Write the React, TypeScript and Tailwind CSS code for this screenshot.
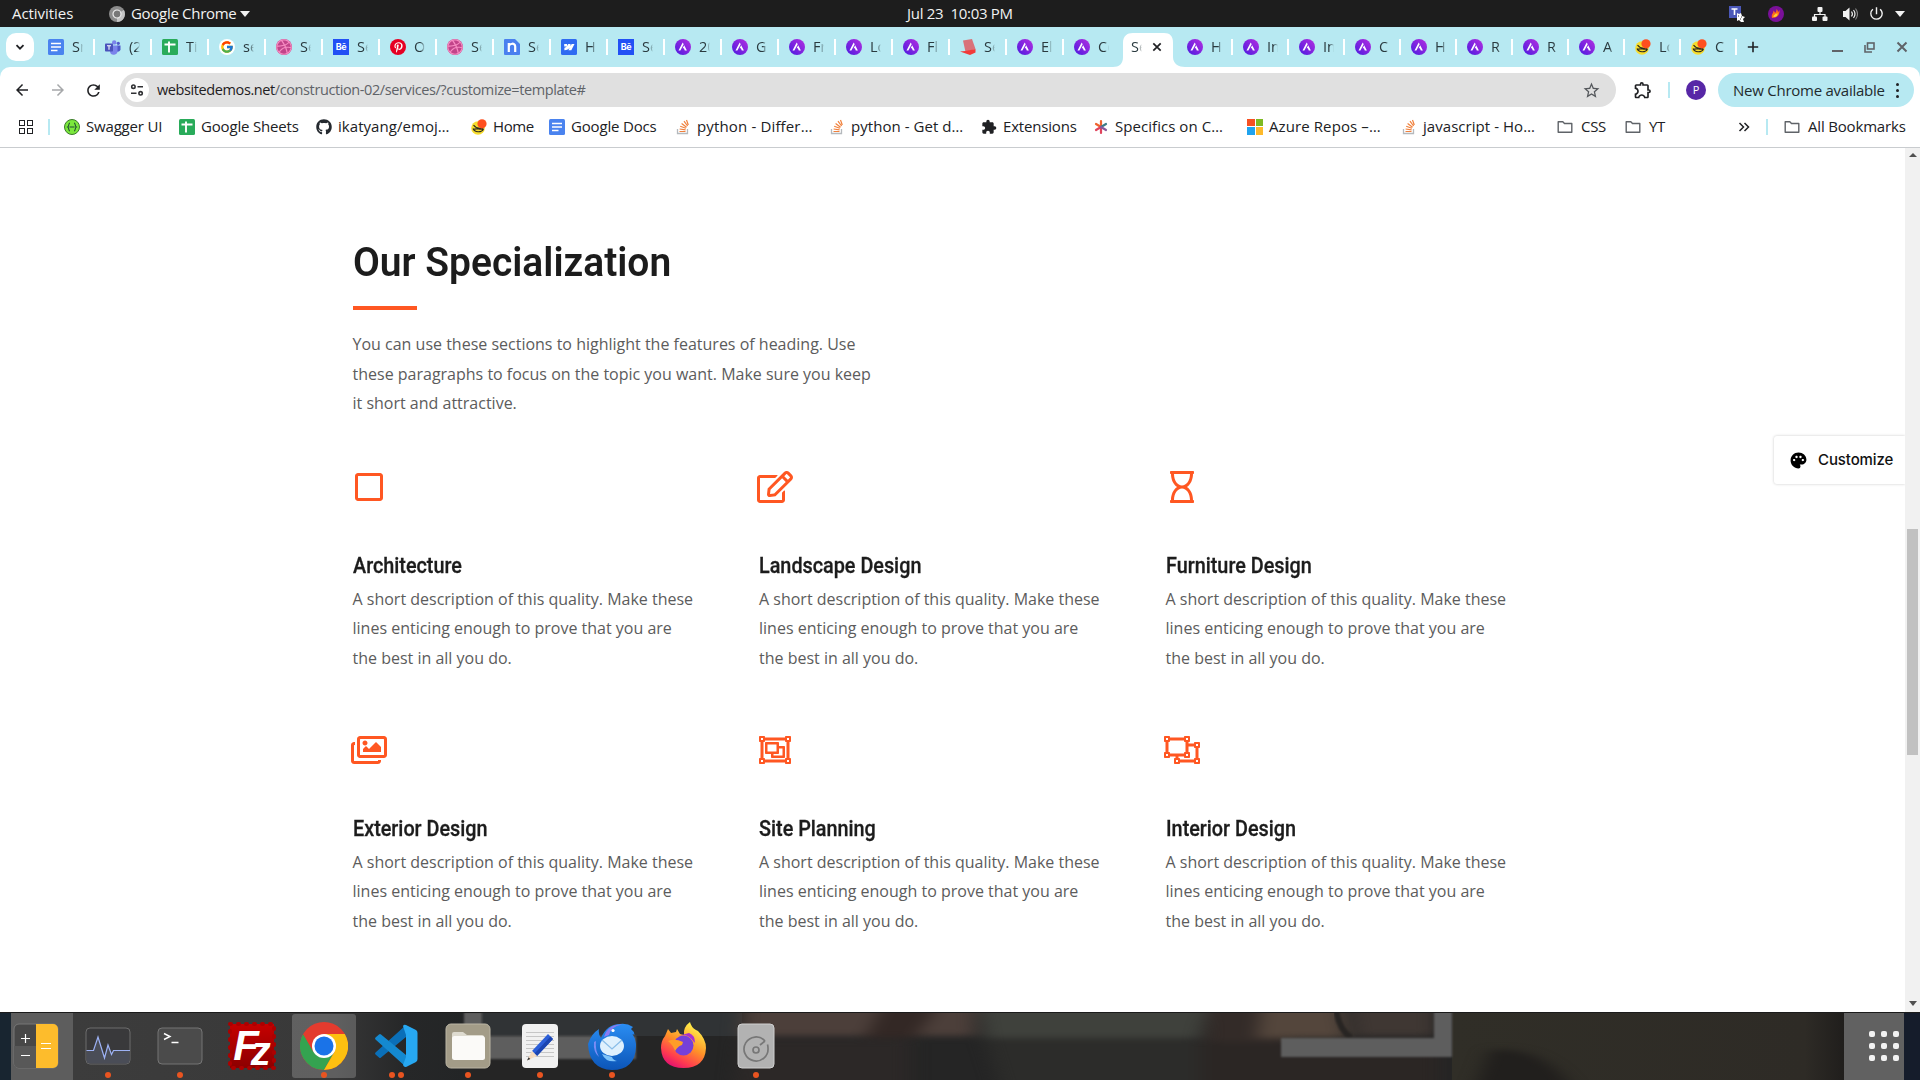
import type { ReactNode } from "react";
import { FaRegSquare, FaRegEdit, FaRegHourglass, FaRegImages, FaRegObjectGroup, FaRegObjectUngroup, FaGithub, FaPinterestP, FaDribbble } from "react-icons/fa";
import { MdPalette, MdExtension, MdOutlineExtension, MdArrowBack, MdArrowForward, MdRefresh, MdStarBorder, MdPowerSettingsNew } from "react-icons/md";
import { FcGoogle } from "react-icons/fc";

type Kind =
  | "docs" | "teams" | "sheets" | "google" | "dribbble" | "behance" | "pinterest" | "n" | "webflow"
  | "astra" | "red" | "chef" | "swagger" | "github" | "stack" | "puzzle" | "star" | "ms" | "folder";

function Fav({ kind }: { kind: Kind }): ReactNode {
  switch (kind) {
    case "docs":
      return (
        <svg className="size-4 shrink-0" viewBox="0 0 16 16">
          <rect width="16" height="16" rx="1.5" fill="#4a83ef" />
          <path d="M3 4.5h10M3 8h10M3 11.5h6.5" stroke="#fff" strokeWidth="1.6" />
        </svg>
      );
    case "sheets":
      return (
        <svg className="size-4 shrink-0" viewBox="0 0 16 16">
          <rect width="16" height="16" rx="1.5" fill="#29ab5a" />
          <path d="M2.5 5.5h11M7 2.5v11" stroke="#fff" strokeWidth="1.9" />
        </svg>
      );
    case "teams":
      return (
        <svg className="size-4 shrink-0" viewBox="0 0 16 16">
          <circle cx="13.3" cy="4.3" r="1.6" fill="#5059c9" />
          <circle cx="9.2" cy="3.4" r="2.2" fill="#7b83eb" />
          <path d="M12 6.5h3.5v4a2.6 2.6 0 0 1-3.5 2z" fill="#5059c9" />
          <path d="M5 6.5h7.5v5a3.7 3.7 0 0 1-7.5 1z" fill="#7b83eb" />
          <rect y="4.5" width="8" height="8" rx=".8" fill="#4b53bc" />
          <path d="M2 6.7h4M4 6.7v4" stroke="#fff" strokeWidth="1.1" />
        </svg>
      );
    case "google":
      return <span className="flex size-4 shrink-0 items-center justify-center rounded-full bg-white"><FcGoogle size={14} /></span>;
    case "dribbble":
      return (
        <span className="flex size-4 shrink-0 items-center justify-center rounded-full bg-[#c2448a]">
          <FaDribbble size={16} color="#f78cc2" />
        </span>
      );
    case "behance":
      return <span className="flex size-4 shrink-0 items-center justify-center bg-[#2250f5] font-['Inter'] text-[9px] font-bold tracking-[-0.4px] text-white">Bē</span>;
    case "pinterest":
      return <span className="flex size-4 shrink-0 items-center justify-center rounded-full bg-[#e60023]"><FaPinterestP size={11} color="#fff" /></span>;
    case "n":
      return (
        <svg className="size-4 shrink-0" viewBox="0 0 16 16">
          <path d="M1 0h10l5 5v10a1 1 0 0 1-1 1H1a1 1 0 0 1-1-1V1a1 1 0 0 1 1-1z" fill="#4a80ef" />
          <path d="M4.8 13V4M4.8 7.4C5.2 4 11.2 3.600 11.200 7.600V13" stroke="#fff" strokeWidth="2.2" fill="none" />
        </svg>
      );
    case "webflow":
      return (
        <svg className="size-4 shrink-0" viewBox="0 0 16 16">
          <rect width="16" height="16" rx="1.5" fill="#2f6bf2" />
          <path d="M13.500 5l-3.200 6.300H7.400l1.300-2.500C7.600 10.200 6 11.100 3.400 11.300V8.800c1-.1 1.900-.5 2.500-1.200H3.200V5h2.900v2l1.200-2h2.200v2l1.200-2z" fill="#fff" />
        </svg>
      );
    case "astra":
      return (
        <svg className="size-4 shrink-0" viewBox="0 0 16 16">
          <defs>
            <linearGradient id="astra" x1="0" y1="1" x2="1" y2="0">
              <stop offset="0" stopColor="#4a1be0" />
              <stop offset="1" stopColor="#b52ee0" />
            </linearGradient>
          </defs>
          <circle cx="8" cy="8" r="8" fill="url(#astra)" />
          <path d="M7.700 3.400 3.500 11.600h1.900l3.300-6.400z" fill="#fff" />
          <path d="M9.200 6.200 7.600 9.300h1.300l.9 2.300h2.100z" fill="#fff" />
        </svg>
      );
    case "red":
      return (
        <svg className="size-4 shrink-0" viewBox="0 0 16 16">
          <path d="M3 1.500 12 0l3.500 10-10 3z" fill="#d9727a" />
          <path d="M0 12.500 5.500 12l10-2v3.500L10 16z" fill="#f23a3a" />
        </svg>
      );
    case "chef":
      return (
        <svg className="size-4 shrink-0" viewBox="0 0 16 16">
          <circle cx="7" cy="9" r="6.800" fill="#f6dc2e" />
          <path d="M2.500 6.200c2.200 3 6.500 3.500 9.500 2.600M2 9.500c1.500 4 8.500 4.500 10.500.4M2.500 10.500c3-2 7 1 10-.8" stroke="#2b2a20" strokeWidth="1.100" fill="none" />
          <circle cx="11" cy="4.800" r="4.600" fill="#ff4f1f" />
        </svg>
      );
    case "swagger":
      return (
        <svg className="size-4 shrink-0" viewBox="0 0 16 16">
          <circle cx="8" cy="8" r="7.500" fill="#7be83c" stroke="#3a7a2a" strokeWidth="1" />
          <path d="M6 4c-1.800 0-.6 3.200-2.300 4C5.400 8.800 4.200 12 6 12M10 4c1.800 0 .6 3.200 2.300 4-1.700.8-.5 4-2.300 4M5.500 8h5" stroke="#1f4a34" strokeWidth="1.100" fill="none" />
        </svg>
      );
    case "github":
      return <FaGithub className="size-4 shrink-0" color="#24292f" />;
    case "stack":
      return (
        <svg className="size-4 shrink-0" viewBox="0 0 16 16" fill="none">
          <path d="M2.500 10v4.500h10V10" stroke="#b5b9bd" strokeWidth="1.300" />
          <path d="M4.500 12.500h6M4.600 10l6 .8M5.200 7.300l5.700 2M6.600 4.600l5 3.600M9 2.200l3.600 4.800M11.500 1l1.800 5" stroke="#f0803c" strokeWidth="1.200" />
        </svg>
      );
    case "puzzle":
      return <MdExtension className="size-4 shrink-0" color="#202124" />;
    case "star":
      return (
        <svg className="size-4 shrink-0" viewBox="0 0 16 16" strokeWidth="2.200" strokeLinecap="round">
          <path d="M8 8V2M8 8 3 5" stroke="#f0622d" />
          <path d="M8 8 3 11M8 8v6" stroke="#e0435c" />
          <path d="M8 8l5-3" stroke="#3b7c86" />
          <path d="M8 8l5 3" stroke="#8a5a9a" />
        </svg>
      );
    case "ms":
      return (
        <span className="grid size-4 shrink-0 grid-cols-2 gap-px">
          <i className="bg-[#f65022]" /><i className="bg-[#7eba22]" /><i className="bg-[#1fa3ee]" /><i className="bg-[#fdb92a]" />
        </span>
      );
    case "folder":
      return (
        <svg className="size-4 shrink-0" viewBox="0 0 16 16">
          <path d="M1.200 2.700h4.600l1.700 1.800h7.300v8.800H1.200z" fill="none" stroke="#5f6368" strokeWidth="1.400" strokeLinejoin="round" />
        </svg>
      );
  }
}

type TabData = [Kind, string];
const LEFT_TABS: TabData[] = [
  ["docs", "Sn"], ["teams", "(2"], ["sheets", "Ti"], ["google", "se"], ["dribbble", "Se"], ["behance", "Se"], ["pinterest", "O"],
  ["dribbble", "Se"], ["n", "Se"], ["webflow", "H"], ["behance", "Se"], ["astra", "20"], ["astra", "G"], ["astra", "Fr"], ["astra", "Lo"],
  ["astra", "Fl"], ["red", "Se"], ["astra", "El"], ["astra", "Co"],
];
const RIGHT_TABS: TabData[] = [
  ["astra", "H"], ["astra", "In"], ["astra", "In"], ["astra", "C"], ["astra", "H"], ["astra", "R"], ["astra", "R"], ["astra", "A"], ["chef", "Lo"], ["chef", "C"],
];

function TabLabel({ children }: { children: string }) {
  return (
    <span className="w-[11px] overflow-hidden text-[14.5px] leading-5 whitespace-nowrap text-[#2a3a3f] [mask-image:linear-gradient(to_right,black_60%,transparent)]">
      {children}
    </span>
  );
}

function Tab({ tab, wide, last }: { tab: TabData; wide?: boolean; last?: boolean }) {
  return (
    <div className={`flex h-5 shrink-0 items-center ${wide ? "w-[57px]" : "w-14"}`}>
      <div className="flex flex-1 items-center gap-2 pl-[10px]">
        <Fav kind={tab[0]} />
        <TabLabel>{tab[1]}</TabLabel>
      </div>
      {!last && <div className="h-4 w-0.5 shrink-0 bg-white" />}
    </div>
  );
}

const BOOKMARKS: { kind: Kind; label: string; box: string; text?: string }[] = [
  { kind: "swagger", label: "Swagger UI", box: "w-[115px]" },
  { kind: "sheets", label: "Google Sheets", box: "w-[137px]" },
  { kind: "github", label: "ikatyang/emoj…", box: "w-[155px]", text: "tracking-[0.05px]" },
  { kind: "chef", label: "Home", box: "w-[78px]", text: "tracking-[-0.4px]" },
  { kind: "docs", label: "Google Docs", box: "w-[126px]" },
  { kind: "stack", label: "python - Differ…", box: "w-[154px]", text: "tracking-[0.15px]" },
  { kind: "stack", label: "python - Get d…", box: "w-[152px]", text: "tracking-[0.05px]" },
  { kind: "puzzle", label: "Extensions", box: "w-[112px]" },
  { kind: "star", label: "Specifics on C…", box: "w-[154px]", text: "tracking-[0.05px]" },
  { kind: "ms", label: "Azure Repos –…", box: "w-[154px]", text: "tracking-[0.1px]" },
  { kind: "stack", label: "javascript - Ho…", box: "w-[156px]", text: "tracking-[0.05px]" },
  { kind: "folder", label: "CSS", box: "w-[68px]" },
  { kind: "folder", label: "YT", box: "w-[60px]" },
];

function SystemBar() {
  return (
    <div className="flex h-[27px] items-center bg-[#1d1d1d] text-[15px] tracking-[-0.3px] text-[#f2f2f2]">
      <div className="w-[109px] pl-3 tracking-[-0.05px]">Activities</div>
      <svg className="size-4" viewBox="0 0 16 16">
        <circle cx="8" cy="8" r="8" fill="#8c8c8c" />
        <path d="M8 8 14.900 4A8 8 0 0 1 8 16z" fill="#c4c4c4" />
        <circle cx="8" cy="8" r="4" fill="#777" stroke="#eee" strokeWidth="1.200" />
      </svg>
      <div className="w-[110px] pl-[6px] whitespace-nowrap">Google Chrome</div>
      <div className="ml-[5px] border-x-[5px] border-t-[6px] border-x-transparent border-t-[#f2f2f2]" />
      <div className="ml-[657px] w-[120px] whitespace-pre">Jul 23  10:03 PM</div>
      <div className="flex flex-1 items-center justify-end pr-[15px]">
        <svg className="mr-[23px] h-4 w-4" viewBox="0 0 16 16">
          <rect width="12" height="12" fill="#4b58b8" />
          <path d="M2.500 3h6M5.500 3v6" stroke="#fff" strokeWidth="1.600" />
          <path d="M8 7l2 1 2-1 1 3 3 1-2 2 1 3h-3l-2-2-2 1z" fill="#fff" />
          <path d="M9 10h1M12 11h1M11 13h1" stroke="#333" />
        </svg>
        <svg className="mr-[28px] size-4" viewBox="0 0 16 16">
          <circle cx="8" cy="8" r="8" fill="#7a1099" />
          <path d="M4 12C3 8 5.500 7.500 5.500 4.500 7 6 7 7 7 7c1.500-1 1.500-3 1.500-4 1.500 1 1.500 3 1.500 3 1-.5 1.500-2 1.500-2 .5 5-2.500 8-7.500 8z" fill="#ff6a1a" />
          <path d="M5.500 11C5 9 7 9 7.500 7.500 8.500 8 9 7.500 9.500 7c.5 3-1.500 4.500-4 4z" fill="#ffd02e" />
        </svg>
        <svg className="mr-[14px] size-4" viewBox="0 0 16 16" fill="#f2f2f2">
          <rect x="5.500" y="1" width="5" height="5" rx="1" />
          <rect x="0" y="10.500" width="5" height="4.500" rx="1" />
          <rect x="10.500" y="10.500" width="5" height="4.500" rx="1" />
          <path d="M8 6v2.500M2.500 11V8.500h10.500V11" fill="none" stroke="#f2f2f2" strokeWidth="1.200" />
        </svg>
        <svg className="mr-[10px] size-4" viewBox="0 0 16 16">
          <path d="M1 5h2.500L7.500 1.500v13L3.500 11H1z" fill="#f2f2f2" />
          <path d="M9.500 5.500q1.800 2.500 0 5M11.500 4q3 4 0 8" stroke="#f2f2f2" strokeWidth="1.200" fill="none" />
          <path d="M13.500 2.500q4 5.500 0 11" stroke="#888" strokeWidth="1.100" fill="none" />
        </svg>
        <MdPowerSettingsNew size={17} className="mr-[10px]" />
        <div className="border-x-[5px] border-t-[6px] border-x-transparent border-t-[#f2f2f2]" />
      </div>
    </div>
  );
}

function TabStrip() {
  return (
    <div className="flex h-10 items-center bg-[#b7e9f2]">
      <div className="ml-[6px] flex h-7 w-7 shrink-0 items-center justify-center rounded-[10px] bg-white">
        <svg className="size-3" viewBox="0 0 12 12"><path d="M2.500 4.200 6 7.700l3.500-3.500" stroke="#202124" strokeWidth="1.800" fill="none" /></svg>
      </div>
      <div className="ml-1 flex">
        {LEFT_TABS.map((t, i) => <Tab key={i} tab={t} wide last={i === LEFT_TABS.length - 1} />)}
      </div>
      <div className="flex h-10 w-[56px] items-end">
        <svg className="-ml-2 h-[34px] w-[72px] shrink-0" viewBox="0 0 72 34">
          <path d="M0 34C6 34 10 31 10 24V10C10 3 14 0 20 0H51C57 0 60 3 60 10V24C60 31 66 34 72 34z" fill="#fff" />
        </svg>
        <div className="relative -ml-[54px] flex h-[34px] w-[44px] items-center pb-[6px]">
          <TabLabel>Se</TabLabel>
          <svg className="ml-[9px] size-3 shrink-0" viewBox="0 0 12 12"><path d="M2.300 2.300l7.400 7.400M9.700 2.300 2.300 9.700" stroke="#202124" strokeWidth="1.700" /></svg>
        </div>
      </div>
      <div className="flex">
        {RIGHT_TABS.map((t, i) => <Tab key={i} tab={t} />)}
      </div>
      <svg className="ml-[10px] size-3" viewBox="0 0 12 12"><path d="M6 .8v10.400M.8 6h10.400" stroke="#202124" strokeWidth="1.600" /></svg>
      <div className="flex flex-1 items-center justify-end pr-3">
        <div className="mt-2 mr-[21px] h-0.5 w-[11px] bg-[#5f6368]" />
        <svg className="mr-[21px] size-[11px]" viewBox="0 0 11 11" fill="none" stroke="#5f6368" strokeWidth="1.600">
          <rect x="3.500" y="1" width="6.500" height="6" /><path d="M1 3v7h7" />
        </svg>
        <svg className="size-3" viewBox="0 0 12 12"><path d="M1.500 1.500l9 9M10.500 1.500l-9 9" stroke="#5f6368" strokeWidth="2" /></svg>
      </div>
    </div>
  );
}

function Toolbar() {
  return (
    <div className="bg-[#b7e9f2]">
      <div className="flex h-[46px] items-center rounded-t-[10px] bg-white">
        <MdArrowBack size={18} className="ml-[13px]" color="#202124" />
        <MdArrowForward size={18} className="ml-[18px]" color="#a6a8aa" />
        <MdRefresh size={19} className="ml-[17px]" color="#202124" />
        <div className="ml-[17px] flex h-[34px] w-[1496px] items-center rounded-full bg-[#e0e0e0] pl-[5px]">
          <div className="flex size-6 items-center justify-center rounded-full bg-white">
            <svg className="size-3.5" viewBox="0 0 14 14" fill="none" stroke="#303134" strokeWidth="1.600">
              <circle cx="3.400" cy="3.700" r="1.700" /><path d="M7.500 3.700H13M1 10.300h5.500" /><circle cx="10.600" cy="10.300" r="1.700" />
            </svg>
          </div>
          <div className="ml-2 flex-1 text-[14.5px] tracking-[-0.4px] whitespace-nowrap text-[#5f6368]">
            <span className="text-[#1f2023]">websitedemos.net</span>/construction-02/services/?customize=template#
          </div>
          <MdStarBorder size={19} className="mr-[15px]" color="#55585c" />
        </div>
        <MdOutlineExtension size={20} className="ml-[17px]" color="#202124" />
        <div className="ml-[15px] h-4 w-0.5 bg-[#b7e9f2]" />
        <div className="ml-4 flex size-5 items-center justify-center rounded-full bg-[#5727a6] text-[11px] text-white">P</div>
        <div className="ml-3 flex h-[34px] w-[196px] items-center justify-between rounded-full bg-[#b7e9f2] pr-[15px] pl-[15px] text-[15px] text-[#1f2b2e]">
          <span className="tracking-[-0.25px] whitespace-nowrap">New Chrome available</span>
          <span className="flex flex-col gap-[3px]">
            <i className="size-[3px] rounded-full bg-[#202124]" /><i className="size-[3px] rounded-full bg-[#202124]" /><i className="size-[3px] rounded-full bg-[#202124]" />
          </span>
        </div>
      </div>
    </div>
  );
}

function BookmarksBar() {
  return (
    <div className="flex h-[35px] items-center border-b border-[#c9cccf] bg-white pb-[7px] text-[15px] tracking-[-0.18px] text-[#202124]">
      <div className="ml-[19px] grid grid-cols-2 gap-0.5">
        {[0, 1, 2, 3].map((i) => <i key={i} className="size-[6px] border-[1.5px] border-[#202124]" />)}
      </div>
      <div className="ml-[15px] h-4 w-0.5 bg-[#b7e9f2]" />
      <div className="ml-[14px] flex">
        {BOOKMARKS.map((b, i) => (
          <div key={i} className={`flex shrink-0 items-center gap-1.5 whitespace-nowrap ${b.box}`}>
            <Fav kind={b.kind} />
            <span className={b.kind === "folder" ? "ml-0.5 tracking-[-0.3px]" : b.text}>{b.label}</span>
          </div>
        ))}
      </div>
      <svg className="ml-[53px] size-3" viewBox="0 0 12 12"><path d="M1.500 2 5.500 6l-4 4M6.500 2l4 4-4 4" stroke="#202124" strokeWidth="1.500" fill="none" /></svg>
      <div className="ml-[16px] h-4 w-0.5 bg-[#b7e9f2]" />
      <div className="ml-4 flex items-center gap-2 whitespace-nowrap"><Fav kind="folder" />All Bookmarks</div>
    </div>
  );
}

const SERVICES: { icon: ReactNode; title: string }[] = [
  { icon: <FaRegSquare className="h-8 w-7 shrink-0" />, title: "Architecture" },
  { icon: <FaRegEdit className="h-8 w-9 shrink-0" />, title: "Landscape Design" },
  { icon: <FaRegHourglass className="h-8 w-6 shrink-0" />, title: "Furniture Design" },
  { icon: <FaRegImages className="h-8 w-9 shrink-0" />, title: "Exterior Design" },
  { icon: <FaRegObjectGroup className="h-8 w-8 shrink-0" />, title: "Site Planning" },
  { icon: <FaRegObjectUngroup className="h-8 w-9 shrink-0" />, title: "Interior Design" },
];

function Page() {
  return (
    <div className="flex h-[864px] bg-white">
      <main className="flex-1 overflow-hidden pl-[352.5px] font-['Open_Sans',sans-serif]">
        <h1 className="mt-[90px] h-[48px] origin-left scale-x-[0.95] font-['Roboto',sans-serif] text-[41px] leading-[49px] font-semibold whitespace-nowrap text-[#1c1c1c]">Our Specialization</h1>
        <div className="mt-5 h-1 w-16 bg-[#ff5722]" />
        <p className="mt-5 w-[525px] text-[16px] leading-[29.6px] text-[#5c5c5c]">
          You can use these sections to highlight the features of heading. Use these paragraphs to focus on the topic you want. Make sure you keep it short and attractive.
        </p>
        <div className="mt-[47px] grid grid-cols-[repeat(3,406.5px)]">
          {SERVICES.map((s) => (
            <section key={s.title} className="h-[263px]">
              <div className="mt-[5px] flex size-8 items-center justify-center text-[#ff5722]">{s.icon}</div>
              <h2 className="mt-[48px] origin-left scale-x-[0.9] font-['Roboto',sans-serif] text-[22px] leading-[30px] font-medium whitespace-nowrap text-[#1c1c1c] [-webkit-text-stroke:0.3px_#1c1c1c]">{s.title}</h2>
              <p className="mt-1 w-[345px] text-[16px] leading-[29.6px] text-[#5c5c5c]">
                A short description of this quality. Make these lines enticing enough to prove that you are the best in all you do.
              </p>
            </section>
          ))}
        </div>
      </main>
      <div className="mt-[288px] flex h-[48px] w-[131px] items-center rounded-l-[3px] bg-white pl-[15px] font-['Inter',sans-serif] text-[15px] font-medium tracking-[-0.1px] text-[#111] shadow-[0_0_3px_rgba(0,0,0,0.22)]">
        <MdPalette size={19} color="#000" />
        <span className="ml-[10px]">Customize</span>
      </div>
      <div className="relative flex w-[15px] flex-col items-center bg-[#f1f1f1]">
        <div className="mt-[5px] border-x-4 border-b-[4px] border-x-transparent border-b-[#505050]" />
        <div className="mt-[372px] h-[226px] w-[11px] bg-[#c1c1c1]" />
        <div className="mt-auto mb-[6px] border-x-4 border-t-[5px] border-x-transparent border-t-[#505050]" />
      </div>
    </div>
  );
}

function CalcIcon() {
  return (
    <svg className="size-12" viewBox="0 0 48 48">
      <rect x="2" y="2" width="44" height="44" rx="5" fill="#474747" stroke="#777" />
      <path d="M24 2h17a5 5 0 0 1 5 5v34a5 5 0 0 1-5 5H24z" fill="#fdbc2c" />
      <path d="M2 24h22v22H7a5 5 0 0 1-5-5z" fill="#585858" />
      <path d="M9 16.500h9M13.500 12v9M9 33.500h9M29 21.500h10M29 26.500h10" stroke="#fff" strokeWidth="1.200" />
    </svg>
  );
}
function MonitorIcon() {
  return (
    <svg className="size-12" viewBox="0 0 48 48">
      <rect x="2" y="6" width="44" height="36" rx="4" fill="#39393b" stroke="#6c6c6c" />
      <path d="M2.500 28.500h7L14 15l6.500 21L24 23l3.500 9.500 2-4h16V38q0 3.500-3.500 3.500H6Q2.500 41.500 2.500 38z" fill="#4a4d57" />
      <path d="M2.500 28.500h7L14 15l6.500 21L24 23l3.500 9.500 2-4H46" fill="none" stroke="#9db2f5" strokeWidth="1.200" />
    </svg>
  );
}
function TerminalIcon() {
  return (
    <svg className="size-12" viewBox="0 0 48 48">
      <rect x="2" y="6" width="44" height="36" rx="4" fill="#4b4b4b" stroke="#757575" />
      <path d="M8 11.500l6 3-6 3M15.500 20.500h7" fill="none" stroke="#fff" strokeWidth="1.400" />
    </svg>
  );
}
function FileZillaIcon() {
  return (
    <div className="relative flex size-12 items-center justify-center">
      <svg className="absolute inset-0 size-12" viewBox="0 0 48 48">
        <defs><linearGradient id="fz" x1="0" y1="0" x2="0" y2="1"><stop offset="0" stopColor="#c60000" /><stop offset="1" stopColor="#8c0000" /></linearGradient></defs>
        <rect x="2" y="2" width="44" height="44" fill="url(#fz)" />
        <rect x="2" y="2" width="44" height="44" fill="none" stroke="#ad0000" strokeWidth="4" strokeLinecap="round" strokeDasharray="1 7" />
      </svg>
      <span className="relative font-['Liberation_Sans'] text-[42px] leading-none font-bold tracking-[-8px] text-white italic">F</span>
      <span className="relative mt-[9px] font-['Liberation_Sans'] text-[40px] leading-none font-bold text-white italic">z</span>
    </div>
  );
}
function ChromeIcon() {
  return (
    <svg className="size-12" viewBox="0 0 48 48">
      <circle cx="24" cy="24" r="24" fill="#e33b2e" />
      <path d="M3.200 12A24 24 0 0 0 24 48l10.400-18L24 36 13.600 30z" fill="#34a350" />
      <path d="M24 12h20.800A24 24 0 0 1 24 48l10.400-18z" fill="#fdc010" />
      <path d="M3.200 12 13.600 30 24 24V12z" fill="#e33b2e" />
      <circle cx="24" cy="24" r="12" fill="#fff" /><circle cx="24" cy="24" r="9.500" fill="#1a73e8" />
    </svg>
  );
}
function CodeIcon() {
  return (
    <svg className="size-12" viewBox="0 0 48 48">
      <path d="M34 3 3.500 30.500q-1 1 0 2L7 35.500q1 1 2 0L34 15z" fill="#0a6fb8" />
      <path d="M34 45 3.500 17.500q-1-1 0-2L7 12.500q1-1 2 0L34 33z" fill="#1489d0" />
      <path d="M34 3q-2-1-3 1L34 13v22L31 43q1 2.500 3 2l10-5q1.500-1 1.500-3V11q0-2-1.500-3z" fill="#27a8f2" />
    </svg>
  );
}
function FilesIcon() {
  return (
    <svg className="size-12" viewBox="0 0 48 48">
      <rect x="2" y="2" width="44" height="44" rx="5" fill="#a39c88" stroke="#bbb5a4" />
      <path d="M8 12q0-2 2-2h9l4 3h15q2 0 2 2v20H8z" fill="#dedbd0" />
      <rect x="8" y="14" width="33" height="24" rx="2.500" fill="#fbfaf8" />
    </svg>
  );
}
function EditorIcon() {
  return (
    <svg className="size-12" viewBox="0 0 48 48">
      <rect x="6" y="2" width="36" height="44" rx="4" fill="#f1f1f1" />
      <path d="M10 10.500h28M10 14.500h28M10 18.500h28M10 22.500h28M10 26.500h28M10 30.500h28M10 34.500h28" stroke="#c6c6c6" />
      <path d="M16 29 32 12l5 5-16 17z" fill="#2c5fd8" /><path d="M18.500 31.500 34.500 14.500l2.500 2.500-16 17z" fill="#1c45b0" />
      <path d="M11 38.500 16 29l5 5z" fill="#f6dcc0" /><path d="M11 38.500l1.600-3.200 1.700 1.700z" fill="#333" />
    </svg>
  );
}
function ThunderbirdIcon() {
  return (
    <svg className="size-12" viewBox="0 0 48 48">
      <defs><linearGradient id="tb" x1="0" y1="0" x2="0" y2="1"><stop offset="0" stopColor="#2a8df2" /><stop offset="1" stopColor="#0c55b8" /></linearGradient></defs>
      <path d="M0 22Q3 12 11 7q-1 5 2 9Q19 2 32 2q7-1 13 3l-2 2q3 2 3.500 6l-2-1q4 6 3.500 13-1 23-24 23Q1 47 0 22z" fill="url(#tb)" />
      <path d="M16 15Q20 2 34 2.500 22 5 21 13z" fill="#8c7bf0" />
      <ellipse cx="24" cy="24" rx="12" ry="10" fill="#dff0fd" />
      <path d="M14 18l10 9 10-9" fill="none" stroke="#8abde8" strokeWidth="1.300" />
      <path d="M14 32q4 9 15 7-4-1-5-4z" fill="#7fc4fa" /><path d="M6 20q-1 10 5 15Q7 28 8 19z" fill="#7a8cf5" />
      <circle cx="25" cy="8.500" r="1.600" fill="#fff" />
    </svg>
  );
}
function FirefoxIcon() {
  return (
    <svg className="size-12" viewBox="0 0 48 48">
      <defs><linearGradient id="ff" x1="0.800" y1="0.100" x2="0.300" y2="1"><stop offset="0" stopColor="#fff04a" /><stop offset="0.450" stopColor="#ff9228" /><stop offset="0.800" stopColor="#ff3a50" /><stop offset="1" stopColor="#e3136f" /></linearGradient></defs>
      <path d="M5 14 8 7l3 4 5-1 1-3 3 5 4 1Q23 5 30 0q1 5 6 8l2 1q8 8 8 17-1 20-22.500 20T1 26Q1 19 5 14z" fill="url(#ff)" />
      <circle cx="23.500" cy="23.500" r="10" fill="#7640d8" />
      <path d="M8 19q7-3 15 1l-1 3q-4 1-7 6-2-6-7-10z" fill="#ff9d28" />
      <path d="M18 14q10-3 15 5l2 2q0-8-6-10z" fill="#a92fd0" />
    </svg>
  );
}
function DiskIcon() {
  return (
    <svg className="size-12" viewBox="0 0 48 48">
      <rect x="6" y="2" width="36" height="44" rx="4" fill="#b2b2b2" stroke="#cfcfcf" />
      <path d="M33 19A12 12 0 1 0 36 26q0-2-.5-3.500M28 23l5-4" fill="none" stroke="#777" strokeWidth="1.700" />
      <circle cx="24" cy="28" r="3" fill="none" stroke="#777" strokeWidth="1.700" />
    </svg>
  );
}

const DOCK: { icon: ReactNode; dots: number; active?: boolean }[] = [
  { icon: <CalcIcon />, dots: 0 }, { icon: <MonitorIcon />, dots: 1 }, { icon: <TerminalIcon />, dots: 1 }, { icon: <FileZillaIcon />, dots: 0 },
  { icon: <ChromeIcon />, dots: 1, active: true }, { icon: <CodeIcon />, dots: 2 }, { icon: <FilesIcon />, dots: 1 }, { icon: <EditorIcon />, dots: 1 },
  { icon: <ThunderbirdIcon />, dots: 1 }, { icon: <FirefoxIcon />, dots: 0 }, { icon: <DiskIcon />, dots: 1 },
];

function Dock() {
  return (
    <div className="relative h-[68px] overflow-hidden bg-[#252525]">
      <svg className="absolute inset-0" width="1920" height="68">
        <defs>
          <linearGradient id="d1"><stop offset="0" stopColor="#3c3c3c" /><stop offset="0.650" stopColor="#393939" /><stop offset="0.850" stopColor="#262728" /><stop offset="1" stopColor="#232526" /></linearGradient>
          <linearGradient id="d2"><stop offset="0" stopColor="#302e27" /><stop offset="0.900" stopColor="#2e2b26" /><stop offset="1" stopColor="#201e1c" /></linearGradient>
          <filter id="soft" filterUnits="userSpaceOnUse" x="600" y="-40" width="1320" height="160" colorInterpolationFilters="sRGB"><feGaussianBlur stdDeviation="9 3" /></filter>
          <filter id="edge" colorInterpolationFilters="sRGB"><feGaussianBlur stdDeviation="0.800" /></filter>
        </defs>
        <rect width="12" height="68" fill="#182530" />
        <rect x="73" width="391" height="68" fill="url(#d1)" />
        <rect x="11" width="62" height="68" fill="#5d5d5d" />
        <rect x="482" width="260" height="24" fill="#303335" />
        <g filter="url(#soft)">
          <path d="M745-30h230v54H740z" fill="#4c3f3a" />
          <path d="M895-30h60l-40 56h-50z" fill="#332825" />
          <path d="M740 28h170v80H730z" fill="#2c2827" />
          <path d="M975-30h240l-15 56H985z" fill="#3f413c" />
          <path d="M985 26h215v80H1010z" fill="#2c2c2a" />
          <path d="M1210-30h80v140h-90z" fill="#332b28" />
          <path d="M1265-30h70l12 56h-90z" fill="#54463c" />
          <path d="M1345-30h90v54h-80z" fill="#3f3733" />
          <path d="M1200 30h240v80h-240z" fill="#2b2624" />
        </g>
        <path d="M1336-4q2 20 15 30" stroke="#282523" strokeWidth="6" fill="none" filter="url(#edge)" />
        <rect x="1452" width="392" height="68" fill="url(#d2)" />
        <path d="M1490 38q60-5 90 50h-110z" fill="#211f1d" filter="url(#soft)" />
        <g filter="url(#edge)" fill="#5e5e5e">
          <path d="M464 0h18v24h154v23H464z" />
          <path d="M1434-2h18v47h-171V26h153z" />
        </g>
        <rect x="1844" width="60" height="68" fill="#616161" />
        <rect x="1904" width="16" height="68" fill="#151c2b" />
        <rect width="1920" height="1" fill="#1b1b1b" />
      </svg>
      <div className="relative flex h-full items-start">
        {DOCK.map((d, i) => (
          <div key={i} className="flex w-[72px] flex-col items-center">
            <div className={`mt-[2px] flex size-16 items-center justify-center rounded-[3px] ${d.active ? "bg-white/20" : ""}`}>{d.icon}</div>
            <div className="-mt-[6px] flex gap-[3px]">
              {Array.from({ length: d.dots }, (_, k) => <i key={k} className="size-[6px] rounded-full bg-[#e95420]" />)}
            </div>
          </div>
        ))}
        <div className="mt-[19px] mr-[21px] ml-auto grid grid-cols-3 gap-x-[6px] gap-y-[6px]">
          {Array.from({ length: 9 }, (_, k) => <i key={k} className="size-[6px] rounded-[2px] bg-[#f2f2f2]" />)}
        </div>
      </div>
    </div>
  );
}

export default function App() {
  return (
    <div className="h-[1080px] w-[1920px] overflow-hidden bg-white font-['Open_Sans',sans-serif]">
      <SystemBar />
      <TabStrip />
      <Toolbar />
      <BookmarksBar />
      <Page />
      <Dock />
    </div>
  );
}
